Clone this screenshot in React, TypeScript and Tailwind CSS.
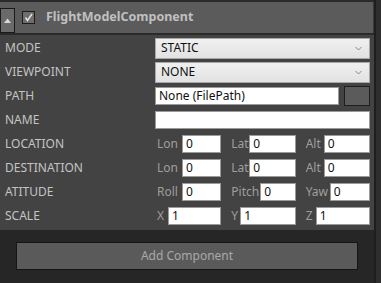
import React from "react";

const font = { fontFamily: '"Noto Sans", "Open Sans", sans-serif' };

function Label({ children }: { children: React.ReactNode }) {
  return <div className="w-[155px] shrink-0 pl-[5px] text-[12px] text-[#c4c4c4] leading-none">{children}</div>;
}

function Input({ value, className = "" }: { value?: string; className?: string }) {
  return (
    <div className={`h-[18px] bg-white border border-[#9a9a9a] flex items-center pl-[3px] text-[12px] text-[#111] leading-none ${className}`}>
      {value}
    </div>
  );
}

function Select({ value }: { value: string }) {
  return (
    <div className="flex-1 h-[21px] bg-gradient-to-b from-[#f0f0f0] to-[#e2e2e2] border border-[#a8a8a8] flex items-center justify-between pl-[5px] pr-[7px] text-[12px] text-[#111] leading-none">
      <span>{value}</span>
      <svg width="7" height="5" viewBox="0 0 7 5"><path d="M0.5 1 L3.5 4 L6.5 1" fill="none" stroke="#888" strokeWidth="1" /></svg>
    </div>
  );
}

function Triple({ items }: { items: [string, string, number][] }) {
  return (
    <div className="flex-1 flex gap-[8px]">
      {items.map(([l, v, w], i) => (
        <div key={i} className="flex-1 flex items-center">
          <span className="text-[12px] text-[#9e9e9e] leading-none pl-[2px]" style={{ width: w }}>{l}</span>
          <Input value={v} className="flex-1" />
        </div>
      ))}
    </div>
  );
}

function Row({ label, children }: { label: string; children: React.ReactNode }) {
  return (
    <div className="h-[24px] flex items-center pr-[4px]">
      <Label>{label}</Label>
      {children}
    </div>
  );
}

export default function App() {
  return (
    <div className="w-[381px] h-[283px] bg-[#2e2e2e] flex overflow-hidden" style={font}>
      <div className="w-[376px] flex flex-col border-r-2 border-[#1e1e1e]">
        <div className="h-[2px] bg-[#2a2a2a]" />
        <div className="h-[31px] bg-[#5b5b5b] border-r border-[#3a3a3a] flex items-end">
          <div className="w-[15px] h-[25px] bg-[#6a6a6a] border border-[#1a1a1a] flex items-center justify-center">
            <svg width="7" height="5" viewBox="0 0 7 5"><path d="M0 5 L3.5 0.5 L7 5 Z" fill="#d8d8d8" /></svg>
          </div>
          <div className="self-center flex items-center ml-[7px]">
            <div className="w-[13px] h-[13px] border border-[#1c1c1c] bg-[#6e6e6e] flex items-center justify-center">
              <svg width="9" height="9" viewBox="0 0 9 9"><path d="M1.5 4.5 L3.5 7.5 L8 1" fill="none" stroke="#e8e8e8" strokeWidth="1.4" /></svg>
            </div>
            <span className="ml-[11px] text-[12.5px] font-bold text-[#c0c0c0] leading-none">FlightModelComponent</span>
          </div>
        </div>
        <div className="h-[2px] bg-[#2a2a2a]" />
        <div className="h-[195px] bg-[#434343] flex flex-col pt-[1px]">
          <Row label="MODE"><Select value="STATIC" /></Row>
          <Row label="VIEWPOINT"><Select value="NONE" /></Row>
          <Row label="PATH">
            <Input value="None (FilePath)" className="flex-1" />
            <div className="ml-[5px] w-[26px] h-[20px] bg-[#5b5b5b] border border-[#1e1e1e]" />
          </Row>
          <Row label="NAME"><Input className="flex-1" /></Row>
          <Row label="LOCATION"><Triple items={[["Lon", "0", 27], ["Lat", "0", 20], ["Alt", "0", 20]]} /></Row>
          <Row label="DESTINATION"><Triple items={[["Lon", "0", 27], ["Lat", "0", 20], ["Alt", "0", 20]]} /></Row>
          <Row label="ATITUDE"><Triple items={[["Roll", "0", 27], ["Pitch", "0", 31], ["Yaw", "0", 26]]} /></Row>
          <Row label="SCALE"><Triple items={[["X", "1", 13], ["Y", "1", 11], ["Z", "1", 12]]} /></Row>
        </div>
        <div className="flex-1 bg-[#262626] pt-[12px] pl-[16px] pr-[16px]">
          <div className="h-[28px] bg-[#5a5a5a] border border-[#151515] flex items-center justify-center text-[12px] text-[#a9a9a9]">
            Add Component
          </div>
        </div>
      </div>
    </div>
  );
}
